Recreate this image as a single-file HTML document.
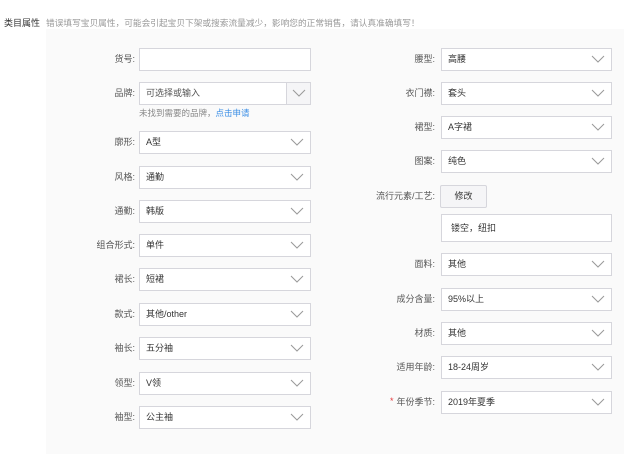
<!DOCTYPE html>
<html><head><meta charset="utf-8"><style>
*{margin:0;padding:0;box-sizing:border-box}
body{width:624px;height:454px;background:#fff;font-family:"Liberation Sans","Noto Sans CJK SC",sans-serif;font-size:9px;color:#333;position:relative;overflow:hidden}
.a{position:absolute}
.panel{left:46px;top:29px;width:578px;height:425px;background:#fafafa}
.lbl{text-align:right;width:120px;color:#555;line-height:23px;height:23px}
.box{background:#fff;border:1px solid #d6d6dc;height:23px;line-height:21px;padding-left:6px;color:#333}
.ar{position:absolute;right:6px;top:6px;width:14px;height:8px}
</style></head><body>
<div class="a" style="left:4px;top:16px;font-size:9px;color:#333">类目属性</div>
<div class="a" style="left:46px;top:16px;font-size:8.7px;color:#999">错误填写宝贝属性，可能会引起宝贝下架或搜索流量减少，影响您的正常销售，请认真准确填写！</div>
<div class="a panel"></div>

<div class="a lbl" style="left:15px;top:48px">货号:</div>
<div class="a box" style="left:139px;top:48px;width:172px"></div>
<div class="a lbl" style="left:15px;top:82px">品牌:</div>
<div class="a box" style="left:139px;top:82px;width:172px;color:#555">可选择或输入<div style="position:absolute;right:0;top:0;width:24px;height:21px;border-left:1px solid #d6d6dc;background:#f5f5f7"><svg class="ar" style="right:4px" viewBox="0 0 14 8"><path d="M1 1L7 7L13 1" fill="none" stroke="#999" stroke-width="1"/></svg></div></div>
<div class="a" style="left:139px;top:107px;color:#888;font-size:8.5px">未找到需要的品牌，<span style="color:#3a8ee6">点击申请</span></div>

<div id="L"></div><div id="R"></div>
<div class="a lbl" style="left:315px;top:185px">流行元素/工艺:</div>
<div class="a" style="left:440px;top:185px;width:47px;height:23px;border:1px solid #d6d6dc;border-radius:2px;background:#f5f5f7;text-align:center;line-height:21px">修改</div>
<div class="a box" style="left:441px;top:214px;width:171px;height:28px;line-height:26px;padding-left:9px">镂空，纽扣</div>
<div class="a" style="left:390px;top:396px;color:#e4393c">*</div>
<script>
var arr='<svg class="ar" viewBox="0 0 14 8"><path d="M1 1L7 7L13 1" fill="none" stroke="#999" stroke-width="1"/></svg>';
var L=[["廓形","A型",131],["风格","通勤",166],["通勤","韩版",200],["组合形式","单件",234],["裙长","短裙",268],["款式","其他/other",303],["袖长","五分袖",337],["领型","V领",372],["袖型","公主袖",406]];
var R=[["腰型","高腰",48],["衣门襟","套头",82],["裙型","A字裙",116],["图案","纯色",150],["面料","其他",253],["成分含量","95%以上",288],["材质","其他",322],["适用年龄","18-24周岁",356],["年份季节","2019年夏季",391]];
var h='';
L.forEach(function(r){h+='<div class="a lbl" style="left:15px;top:'+r[2]+'px">'+r[0]+':</div><div class="a box" style="left:139px;top:'+r[2]+'px;width:172px">'+r[1]+arr+'</div>';});
R.forEach(function(r){h+='<div class="a lbl" style="left:315px;top:'+r[2]+'px">'+r[0]+':</div><div class="a box" style="left:441px;top:'+r[2]+'px;width:171px">'+r[1]+arr+'</div>';});
document.getElementById('L').outerHTML=h;
</script>
</body></html>
